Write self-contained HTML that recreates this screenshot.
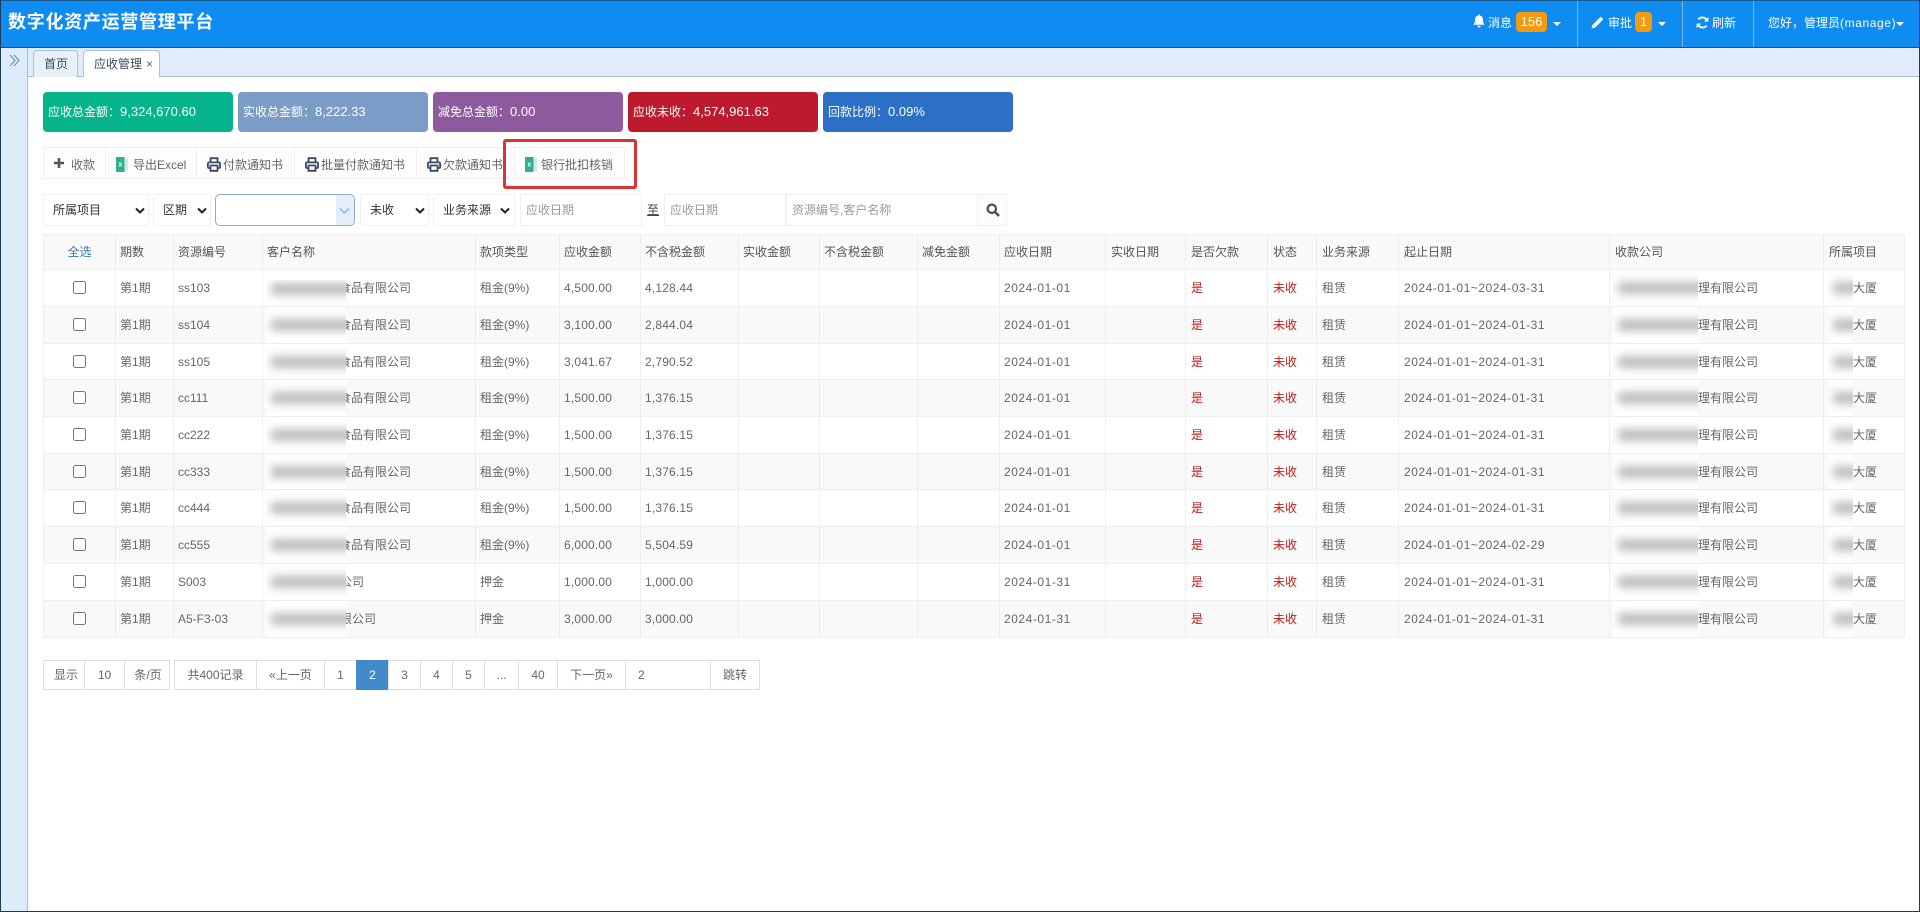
<!DOCTYPE html>
<html lang="zh-CN">
<head>
<meta charset="utf-8">
<title>数字化资产运营管理平台</title>
<style>
*{box-sizing:border-box}
html,body{margin:0;padding:0;width:1920px;height:912px;overflow:hidden;background:#fff;font-family:"Liberation Sans","Noto Sans CJK SC",sans-serif;font-size:12px;color:#666}
.a{position:absolute;white-space:nowrap}
#top{left:0;top:0;width:1920px;height:48px;background:#0f8cf1;border-top:1px solid #17588f;border-bottom:1px solid #1b4a78}
#frame{left:0;top:0;width:1920px;height:912px;border:1px solid #1b3a5c;border-top:none;pointer-events:none}
#side{left:1px;top:48px;width:27px;height:863px;background:#deebfb;border-right:1px solid #a9bcd6}
#strip{left:28px;top:48px;width:1891px;height:29px;background:#e0ecfb;border-bottom:1px solid #aebbd2}
.tab{top:50px;height:27px;line-height:26px;border:1px solid #a9c3dc;border-bottom:none;border-radius:4px 4px 0 0;color:#3c4a5c}
.sep{top:1px;width:1px;height:46px;background:#7fb4df}
.nv{color:#fff;top:13px;line-height:20px}
.badge{background:#f59a0f;color:#fff;border-radius:4px;top:12px;height:20px;line-height:20px;text-align:center;font-size:13px}
.car{width:0;height:0;border-left:4px solid transparent;border-right:4px solid transparent;border-top:4px solid #fff;top:22px}
.card{top:92px;width:190px;height:40px;line-height:40px;border-radius:4px;color:#fff;padding-left:5px;font-size:12px}
.card b{font-weight:normal;font-size:13px}
.btn{top:147px;height:32px;line-height:34px;border:1px solid #f0f0f0;background:#fdfdfd;color:#666}
.t{position:absolute;top:0}
.sel{top:194px;height:32px;line-height:30px;border:1px solid #f0f0f0;background:#fff;color:#333;border-radius:2px}
.sel span{position:absolute;left:9px}
.sel svg{position:absolute;top:12px}
input.ph{position:absolute;top:194px;height:32px;border:1px solid #f0f0f0;background:#fff;padding:0 0 0 5px;margin:0;font:12px "Liberation Sans","Noto Sans CJK SC",sans-serif;outline:none;color:#333}
input.ph::placeholder{color:#9a9a9a;opacity:1}
table{position:absolute;left:43px;top:234px;width:1861px;table-layout:fixed;border-collapse:collapse;font-size:12px;line-height:16px}
th,td{border:1px solid #eee;padding:0 0 0 5px;text-align:left;font-weight:normal;white-space:nowrap;overflow:visible;position:relative;color:#666}
th:nth-child(-n+11),td:nth-child(-n+11){padding-left:4px}
th{background:#f9f9f9;color:#555;height:35px}
tr.z td{background:#f9f9f9}
td.c,th.c{text-align:center;padding:0}
th.c{color:#3a76a8}
td.c input{margin:-2px 0 0 0;width:13px;height:13px;vertical-align:middle}
.d{letter-spacing:.54px}
.m{letter-spacing:.17px}
.r{color:#c01c1c}
td.r{color:#c01c1c}
td.kh{padding-left:76px !important}
td.kx{padding-left:77px !important}
td.gs{padding-left:88px}
td.xm{padding-left:29px}
.p{position:absolute;top:0;bottom:0;left:3px;width:80px;background:#fff;overflow:hidden}
td.gs .p{width:85px}
td.xm .p{left:4px;width:25px}
.p i{position:absolute;display:block;height:12px;top:50%;margin-top:-6px;left:5px;right:-8px;background:#bdbdbd;filter:blur(4.5px)}
.pg{top:660px;height:30px;line-height:28px;border:1px solid #ddd;background:#fff;text-align:center;color:#666}
</style>
</head>
<body>
<div class="a" id="top"></div>
<div class="a" style="left:8px;top:8px;line-height:28px;color:#fff;font-size:18px;font-weight:bold;letter-spacing:.72px">数字化资产运营管理平台</div>

<svg class="a" style="left:1473px;top:14px" width="12" height="14" viewBox="0 0 12 14"><path d="M6 0.5C6.7 0.5 7 1 7 1.6 9.2 2.1 10 3.9 10 6 10 8.6 10.6 9.6 11.6 10.8H0.4C1.4 9.6 2 8.6 2 6 2 3.9 2.8 2.1 5 1.6 5 1 5.3.5 6 .5ZM4.4 11.8H7.6C7.6 12.8 6.9 13.4 6 13.4 5.1 13.4 4.4 12.8 4.4 11.8Z" fill="#fff"/></svg>
<div class="a nv" style="left:1488px">消息</div>
<div class="a badge" style="left:1516px;width:31px">156</div>
<div class="a car" style="left:1553px"></div>
<div class="a sep" style="left:1577px"></div>
<svg class="a" style="left:1591px;top:16px" width="13" height="13" viewBox="0 0 13 13"><path d="M.5 12.5 1.4 9 8.8 1.6C9.4 1 10.3 1 10.9 1.6L11.4 2.1C12 2.7 12 3.6 11.4 4.2L4 11.6Z" fill="#fff"/></svg>
<div class="a nv" style="left:1608px">审批</div>
<div class="a badge" style="left:1635px;width:17px">1</div>
<div class="a car" style="left:1658px"></div>
<div class="a sep" style="left:1682px"></div>
<svg class="a" style="left:1696px;top:16px" width="13" height="13" viewBox="0 0 13 13"><path d="M11 4.6A5 5 0 0 0 2.4 3.4M2 8.4A5 5 0 0 0 10.6 9.6" fill="none" stroke="#fff" stroke-width="1.9"/><path d="M12.4 1V5.5H7.9ZM.6 12V7.5H5.1Z" fill="#fff"/></svg>
<div class="a nv" style="left:1712px">刷新</div>
<div class="a sep" style="left:1753px"></div>
<div class="a nv" style="left:1768px">您好，管理员<span style="letter-spacing:.6px">(manage)</span></div>
<div class="a car" style="left:1896px"></div>

<div class="a" id="side"></div>
<svg class="a" style="left:9px;top:54px" width="11" height="13" viewBox="0 0 11 13"><path d="M1 1 6 6.5 1 12M5 1 10 6.5 5 12" fill="none" stroke="#5a93c8" stroke-width="1.1"/></svg>
<div class="a" id="strip"></div>
<div class="a tab" style="left:33px;width:45px;background:#e8f0fa;padding-left:10px">首页</div>
<div class="a tab" style="left:83px;width:77px;background:#fff;padding-left:10px">应收管理<span style="position:absolute;left:62px;top:0;color:#667;font-size:12px">×</span></div>

<div class="a card" style="left:43px;background:#05b48a">应收总金额：<b>9,324,670.60</b></div>
<div class="a card" style="left:238px;background:#7c9cc8">实收总金额：<b>8,222.33</b></div>
<div class="a card" style="left:433px;background:#8d5a9e">减免总金额：<b>0.00</b></div>
<div class="a card" style="left:628px;background:#be1a2e">应收未收：<b>4,574,961.63</b></div>
<div class="a card" style="left:823px;background:#2b70c4">回款比例：<b>0.09%</b></div>

<div class="a btn" style="left:43px;width:63px"><svg class="t" style="left:9px;top:9px" width="12" height="12" viewBox="0 0 12 12"><path d="M6 1V11M1 6H11" stroke="#555" stroke-width="2.6"/></svg><span class="t" style="left:27px">收款</span></div>
<div class="a btn" style="left:105px;width:92px"><svg class="t" style="left:10px;top:9px" width="12" height="15" viewBox="0 0 12 15"><rect x="6" y="1" width="6" height="13" fill="#d6e8e2"/><rect x="0" y="0" width="8.5" height="15" fill="#2eb090"/><path d="M2.9 5.5 5.6 9.5M5.6 5.5 2.9 9.5" stroke="#fff" stroke-width=".9"/></svg><span class="t" style="left:27px">导出Excel</span></div>
<div class="a btn" style="left:196px;width:99px"><svg class="t" style="left:10px;top:9px" width="14" height="15" viewBox="0 0 14 15"><path d="M3.5 5.5V1.2H10.5V5.5M3 11H1.8C1.2 11 .9 10.6 .9 10V6.8C.9 5.9 1.5 5.4 2.2 5.4H11.8C12.5 5.4 13.1 5.9 13.1 6.8V10C13.1 10.6 12.8 11 12.2 11H11M3.5 8.5H10.5V13.8H3.5Z" fill="none" stroke="#3b4a66" stroke-width="1.8"/></svg><span class="t" style="left:26px">付款通知书</span></div>
<div class="a btn" style="left:294px;width:123px"><svg class="t" style="left:10px;top:9px" width="14" height="15" viewBox="0 0 14 15"><path d="M3.5 5.5V1.2H10.5V5.5M3 11H1.8C1.2 11 .9 10.6 .9 10V6.8C.9 5.9 1.5 5.4 2.2 5.4H11.8C12.5 5.4 13.1 5.9 13.1 6.8V10C13.1 10.6 12.8 11 12.2 11H11M3.5 8.5H10.5V13.8H3.5Z" fill="none" stroke="#3b4a66" stroke-width="1.8"/></svg><span class="t" style="left:26px">批量付款通知书</span></div>
<div class="a btn" style="left:416px;width:99px"><svg class="t" style="left:10px;top:9px" width="14" height="15" viewBox="0 0 14 15"><path d="M3.5 5.5V1.2H10.5V5.5M3 11H1.8C1.2 11 .9 10.6 .9 10V6.8C.9 5.9 1.5 5.4 2.2 5.4H11.8C12.5 5.4 13.1 5.9 13.1 6.8V10C13.1 10.6 12.8 11 12.2 11H11M3.5 8.5H10.5V13.8H3.5Z" fill="none" stroke="#3b4a66" stroke-width="1.8"/></svg><span class="t" style="left:26px">欠款通知书</span></div>
<div class="a btn" style="left:514px;width:111px"><svg class="t" style="left:10px;top:9px" width="12" height="15" viewBox="0 0 12 15"><rect x="6" y="1" width="6" height="13" fill="#d6e8e2"/><rect x="0" y="0" width="8.5" height="15" fill="#2eb090"/><path d="M2.9 5.5 5.6 9.5M5.6 5.5 2.9 9.5" stroke="#fff" stroke-width=".9"/></svg><span class="t" style="left:26px">银行批扣核销</span></div>
<div class="a" style="left:503px;top:139px;width:134px;height:50px;border:3px solid #dc3330;border-radius:3px"></div>

<div class="a sel" style="left:43px;width:106px"><span>所属项目</span><svg style="left:91px" width="10" height="8" viewBox="0 0 10 8"><path d="M1 1.5 5 5.5 9 1.5" fill="none" stroke="#222" stroke-width="2"/></svg></div>
<div class="a sel" style="left:153px;width:58px"><span>区期</span><svg style="left:43px" width="10" height="8" viewBox="0 0 10 8"><path d="M1 1.5 5 5.5 9 1.5" fill="none" stroke="#222" stroke-width="2"/></svg></div>
<div class="a" style="left:215px;top:194px;width:140px;height:32px;border:1px solid #8fabc9;border-radius:5px;background:#fff;overflow:hidden"><div style="position:absolute;right:0;top:0;width:18px;height:30px;background:#e4eefa"></div><svg style="position:absolute;right:4px;top:12px" width="11" height="8" viewBox="0 0 11 8"><path d="M1 1.5 5.5 6 10 1.5" fill="none" stroke="#8cc0e8" stroke-width="1.6"/></svg></div>
<div class="a sel" style="left:360px;width:69px"><span>未收</span><svg style="left:54px" width="10" height="8" viewBox="0 0 10 8"><path d="M1 1.5 5 5.5 9 1.5" fill="none" stroke="#222" stroke-width="2"/></svg></div>
<div class="a sel" style="left:433px;width:82px"><span>业务来源</span><svg style="left:66px" width="10" height="8" viewBox="0 0 10 8"><path d="M1 1.5 5 5.5 9 1.5" fill="none" stroke="#222" stroke-width="2"/></svg></div>
<input class="ph" style="left:520px;width:122px" placeholder="应收日期">
<div class="a" style="left:647px;top:196px;line-height:28px;color:#444;text-decoration:underline">至</div>
<input class="ph" style="left:664px;width:122px" placeholder="应收日期">
<input class="ph" style="left:786px;width:192px" placeholder="资源编号,客户名称">
<div class="a" style="left:977px;top:194px;width:30px;height:32px;border:1px solid #f0f0f0;background:#fcfcfc"><svg style="position:absolute;left:8px;top:8px" width="14" height="14" viewBox="0 0 14 14"><circle cx="5.8" cy="5.8" r="4.2" fill="none" stroke="#44505c" stroke-width="2.2"/><path d="M9 9 13 13" stroke="#44505c" stroke-width="2.6"/></svg></div>

<table>
<colgroup><col style="width:72px"><col style="width:58px"><col style="width:89px"><col style="width:213px"><col style="width:84px"><col style="width:81px"><col style="width:98px"><col style="width:81px"><col style="width:98px"><col style="width:82px"><col style="width:106px"><col style="width:80px"><col style="width:82px"><col style="width:49px"><col style="width:82px"><col style="width:211px"><col style="width:214px"><col style="width:81px"></colgroup>
<tr><th class="c">全选</th><th>期数</th><th>资源编号</th><th>客户名称</th><th>款项类型</th><th>应收金额</th><th>不含税金额</th><th>实收金额</th><th>不含税金额</th><th>减免金额</th><th>应收日期</th><th>实收日期</th><th>是否欠款</th><th>状态</th><th>业务来源</th><th>起止日期</th><th>收款公司</th><th>所属项目</th></tr>

<tr style="height:37px"><td class="c"><input type="checkbox"></td><td>第1期</td><td>ss103</td><td class="kh">食品有限公司<div class="p" style="top:10px"><i style="top:9px"></i></div></td><td>租金(9%)</td><td class="m">4,500.00</td><td class="m">4,128.44</td><td></td><td></td><td></td><td class="d">2024-01-01</td><td></td><td class="r">是</td><td class="r">未收</td><td>租赁</td><td class="d">2024-01-01~2024-03-31</td><td class="gs">理有限公司<div class="p"><i></i></div></td><td class="xm">大厦<div class="p"><i></i></div></td></tr>
<tr class="z" style="height:37px"><td class="c"><input type="checkbox"></td><td>第1期</td><td>ss104</td><td class="kh">食品有限公司<div class="p"><i></i></div></td><td>租金(9%)</td><td class="m">3,100.00</td><td class="m">2,844.04</td><td></td><td></td><td></td><td class="d">2024-01-01</td><td></td><td class="r">是</td><td class="r">未收</td><td>租赁</td><td class="d">2024-01-01~2024-01-31</td><td class="gs">理有限公司<div class="p"><i></i></div></td><td class="xm">大厦<div class="p"><i></i></div></td></tr>
<tr style="height:36px"><td class="c"><input type="checkbox"></td><td>第1期</td><td>ss105</td><td class="kh">食品有限公司<div class="p"><i></i></div></td><td>租金(9%)</td><td class="m">3,041.67</td><td class="m">2,790.52</td><td></td><td></td><td></td><td class="d">2024-01-01</td><td></td><td class="r">是</td><td class="r">未收</td><td>租赁</td><td class="d">2024-01-01~2024-01-31</td><td class="gs">理有限公司<div class="p"><i></i></div></td><td class="xm">大厦<div class="p"><i></i></div></td></tr>
<tr class="z" style="height:37px"><td class="c"><input type="checkbox"></td><td>第1期</td><td>cc111</td><td class="kh">食品有限公司<div class="p"><i></i></div></td><td>租金(9%)</td><td class="m">1,500.00</td><td class="m">1,376.15</td><td></td><td></td><td></td><td class="d">2024-01-01</td><td></td><td class="r">是</td><td class="r">未收</td><td>租赁</td><td class="d">2024-01-01~2024-01-31</td><td class="gs">理有限公司<div class="p"><i></i></div></td><td class="xm">大厦<div class="p"><i></i></div></td></tr>
<tr style="height:37px"><td class="c"><input type="checkbox"></td><td>第1期</td><td>cc222</td><td class="kh">食品有限公司<div class="p"><i></i></div></td><td>租金(9%)</td><td class="m">1,500.00</td><td class="m">1,376.15</td><td></td><td></td><td></td><td class="d">2024-01-01</td><td></td><td class="r">是</td><td class="r">未收</td><td>租赁</td><td class="d">2024-01-01~2024-01-31</td><td class="gs">理有限公司<div class="p"><i></i></div></td><td class="xm">大厦<div class="p"><i></i></div></td></tr>
<tr class="z" style="height:36px"><td class="c"><input type="checkbox"></td><td>第1期</td><td>cc333</td><td class="kh">食品有限公司<div class="p"><i></i></div></td><td>租金(9%)</td><td class="m">1,500.00</td><td class="m">1,376.15</td><td></td><td></td><td></td><td class="d">2024-01-01</td><td></td><td class="r">是</td><td class="r">未收</td><td>租赁</td><td class="d">2024-01-01~2024-01-31</td><td class="gs">理有限公司<div class="p"><i></i></div></td><td class="xm">大厦<div class="p"><i></i></div></td></tr>
<tr style="height:37px"><td class="c"><input type="checkbox"></td><td>第1期</td><td>cc444</td><td class="kh">食品有限公司<div class="p"><i></i></div></td><td>租金(9%)</td><td class="m">1,500.00</td><td class="m">1,376.15</td><td></td><td></td><td></td><td class="d">2024-01-01</td><td></td><td class="r">是</td><td class="r">未收</td><td>租赁</td><td class="d">2024-01-01~2024-01-31</td><td class="gs">理有限公司<div class="p"><i></i></div></td><td class="xm">大厦<div class="p"><i></i></div></td></tr>
<tr class="z" style="height:37px"><td class="c"><input type="checkbox"></td><td>第1期</td><td>cc555</td><td class="kh">食品有限公司<div class="p"><i></i></div></td><td>租金(9%)</td><td class="m">6,000.00</td><td class="m">5,504.59</td><td></td><td></td><td></td><td class="d">2024-01-01</td><td></td><td class="r">是</td><td class="r">未收</td><td>租赁</td><td class="d">2024-01-01~2024-02-29</td><td class="gs">理有限公司<div class="p"><i></i></div></td><td class="xm">大厦<div class="p"><i></i></div></td></tr>
<tr style="height:37px"><td class="c"><input type="checkbox"></td><td>第1期</td><td>S003</td><td class="kx">公司<div class="p"><i></i></div></td><td>押金</td><td class="m">1,000.00</td><td class="m">1,000.00</td><td></td><td></td><td></td><td class="d">2024-01-31</td><td></td><td class="r">是</td><td class="r">未收</td><td>租赁</td><td class="d">2024-01-01~2024-01-31</td><td class="gs">理有限公司<div class="p"><i></i></div></td><td class="xm">大厦<div class="p"><i></i></div></td></tr>
<tr class="z" style="height:37px"><td class="c"><input type="checkbox"></td><td>第1期</td><td>A5-F3-03</td><td class="kx">限公司<div class="p"><i></i></div></td><td>押金</td><td class="m">3,000.00</td><td class="m">3,000.00</td><td></td><td></td><td></td><td class="d">2024-01-31</td><td></td><td class="r">是</td><td class="r">未收</td><td>租赁</td><td class="d">2024-01-01~2024-01-31</td><td class="gs">理有限公司<div class="p"><i></i></div></td><td class="xm">大厦<div class="p"><i></i></div></td></tr>
</table>

<div class="a pg" style="left:43px;width:42px;text-indent:4px">显示</div>
<div class="a pg" style="left:84px;width:41px">10</div>
<div class="a pg" style="left:124px;width:46px;text-indent:2px">条/页</div>
<div class="a pg" style="left:174px;width:83px">共400记录</div>
<div class="a pg" style="left:256px;width:69px">«上一页</div>
<div class="a pg" style="left:324px;width:33px">1</div>
<div class="a pg" style="left:356px;width:33px;background:#428bca;border-color:#428bca;color:#fff">2</div>
<div class="a pg" style="left:388px;width:33px">3</div>
<div class="a pg" style="left:420px;width:33px">4</div>
<div class="a pg" style="left:452px;width:33px">5</div>
<div class="a pg" style="left:484px;width:35px">...</div>
<div class="a pg" style="left:518px;width:40px">40</div>
<div class="a pg" style="left:557px;width:69px">下一页»</div>
<div class="a pg" style="left:625px;width:86px;text-align:left;padding-left:12px">2</div>
<div class="a pg" style="left:710px;width:50px">跳转</div>

<div class="a" id="frame"></div>
</body>
</html>
